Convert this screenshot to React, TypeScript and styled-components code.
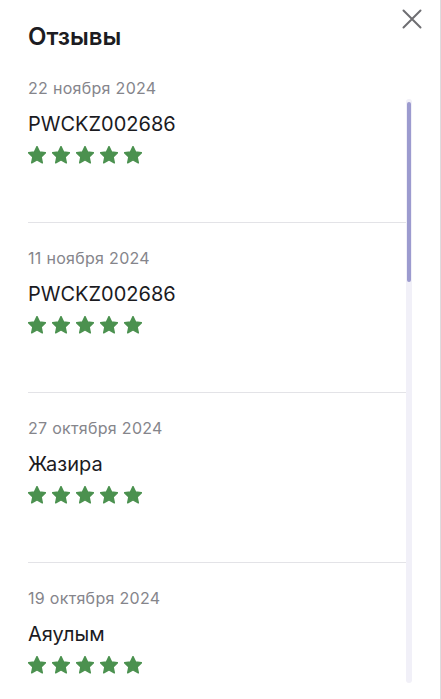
import React from 'react';
import styled, { createGlobalStyle } from 'styled-components';

const GlobalStyle = createGlobalStyle`
  html, body {
    margin: 0;
    padding: 0;
    background: #ffffff;
    font-family: Inter, 'Noto Sans', 'Liberation Sans', sans-serif;
    -webkit-font-smoothing: antialiased;
  }
  * {
    box-sizing: border-box;
  }
`;

const Panel = styled.div`
  width: 441px;
  height: 699px;
  background: #ffffff;
  border-right: 1px solid #dcdcde;
  padding: 0 28px 0 28px;
  display: flex;
  flex-direction: column;
  overflow: hidden;
`;

const Header = styled.div`
  display: flex;
  justify-content: space-between;
  align-items: flex-start;
  height: 53px;
  padding-top: 9px;
`;

const Title = styled.h2`
  margin: 14px 0 0;
  font-size: 24px;
  line-height: 28px;
  font-weight: 600;
  color: #1c1c22;
`;

const CloseButton = styled.button`
  margin: 0 -10px 0 0;
  padding: 0;
  width: 20px;
  height: 20px;
  border: none;
  background: transparent;
  color: #6e6e72;
  cursor: pointer;
  display: flex;
  align-items: center;
  justify-content: center;
`;

const Body = styled.div`
  flex: 1;
  display: flex;
  min-height: 0;
`;

const List = styled.div`
  flex: 1;
  overflow: hidden;
`;

const ScrollTrack = styled.div`
  width: 6px;
  margin: 46px 0 16px;
  border-radius: 3px;
  background: #f1f0f8;
  padding: 3px 1px 0;
`;

const ScrollThumb = styled.div`
  height: 180px;
  border-radius: 2px;
  background: #9c9bcf;
`;

const Review = styled.div`
  padding: 25px 0 58px;
  border-bottom: 1px solid #e3e3e7;
`;

const DateLine = styled.div`
  font-size: 16px;
  line-height: 20px;
  letter-spacing: 0.3px;
  color: #85858b;
`;

const Author = styled.div`
  margin-top: 14px;
  font-size: 20px;
  line-height: 24px;
  color: #1b1b1f;
`;

const Stars = styled.div`
  margin-top: 10px;
  display: flex;
  gap: 6px;
  height: 18px;
`;

const StarIcon = ({ filled }: { filled: boolean }) => (
  <svg width="18" height="18" viewBox="2 2 20 20">
    <path
      d="M12 2.6l2.9 6.1 6.6.8-4.9 4.6 1.3 6.6L12 17.4l-5.9 3.3 1.3-6.6-4.9-4.6 6.6-.8z"
      fill={filled ? '#4b914f' : '#d6d6da'}
      stroke={filled ? '#4b914f' : '#d6d6da'}
      strokeWidth="1.6"
      strokeLinejoin="round"
    />
  </svg>
);

const CloseIcon = () => (
  <svg width="20" height="20" viewBox="0 0 20 20">
    <path d="M1.5 1.5l17 17M18.5 1.5l-17 17" stroke="currentColor" strokeWidth="2" strokeLinecap="round" />
  </svg>
);

const reviews = [
  { date: '22 ноября 2024', author: 'PWCKZ002686', rating: 5 },
  { date: '11 ноября 2024', author: 'PWCKZ002686', rating: 5 },
  { date: '27 октября 2024', author: 'Жазира', rating: 5 },
  { date: '19 октября 2024', author: 'Аяулым', rating: 5 },
  { date: '12 октября 2024', author: 'Айгерим', rating: 5 },
];

const App: React.FC = () => {
  return (
    <>
      <GlobalStyle />
      <Panel>
        <Header>
          <Title>Отзывы</Title>
          <CloseButton aria-label="Закрыть">
            <CloseIcon />
          </CloseButton>
        </Header>

        <Body>
          <List>
            {reviews.map((review, index) => (
              <Review key={index}>
                <DateLine>{review.date}</DateLine>
                <Author>{review.author}</Author>
                <Stars>
                  {[0, 1, 2, 3, 4].map((i) => (
                    <StarIcon key={i} filled={i < review.rating} />
                  ))}
                </Stars>
              </Review>
            ))}
          </List>
          <ScrollTrack>
            <ScrollThumb />
          </ScrollTrack>
        </Body>
      </Panel>
    </>
  );
};

export default App;
